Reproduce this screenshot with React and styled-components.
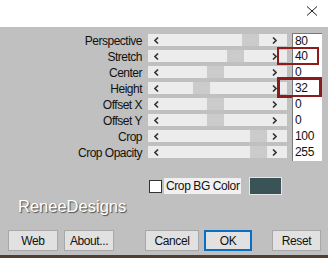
import React from 'react'
import styled, { createGlobalStyle } from 'styled-components'

const GlobalStyle = createGlobalStyle`
  html, body {
    margin: 0;
    padding: 0;
    background: #c0c0c0;
  }
  body {
    font-family: "Liberation Sans", Arial, sans-serif;
  }
`

const Window = styled.div`
  width: 328px;
  height: 258px;
  display: flex;
  flex-direction: column;
  background: #c0c0c0;
  overflow: hidden;
  box-sizing: border-box;
  border-bottom: 3px solid #4f3f33;
`

const TitleBar = styled.div`
  height: 27px;
  flex: none;
  background: #fff;
  display: flex;
  justify-content: flex-end;
  align-items: flex-start;
  padding: 6px 10px 0 0;
  box-sizing: border-box;
`

const Close = styled.svg`
  width: 12px;
  height: 10px;
`

const Rows = styled.div`
  margin-top: 6px;
  display: grid;
  grid-template-columns: 142px 139px 29px;
  column-gap: 6px;
  grid-auto-rows: 16px;
`

const Label = styled.div`
  text-align: right;
  font-size: 12px;
  letter-spacing: -0.5px;
  line-height: 16px;
  color: #111;
  white-space: nowrap;
`

const Track = styled.div`
  position: relative;
  height: 12px;
  margin-top: 1px;
  background: #ececec;
  display: flex;
  align-items: center;
  justify-content: space-between;
  padding: 0 10px 0 6px;
  box-sizing: border-box;
`

const Thumb = styled.div`
  position: absolute;
  top: 0;
  width: 17px;
  height: 12px;
  background: #cbcbcb;
`

const Arrow = styled.svg`
  width: 5px;
  height: 7px;
  position: relative;
  z-index: 1;
`

const ValueCell = styled.div`
  position: relative;
  margin-left: -1px;
  background: #fff;
  border-left: 1px solid #7a7a7a;
  border-top: ${p => (p.$first ? '1px solid #7a7a7a' : 'none')};
  font-size: 12px;
  letter-spacing: -0.3px;
  line-height: 15px;
  padding-left: 2px;
  color: #111;
  box-sizing: border-box;
`

const Mark = styled.div`
  position: absolute;
  left: -16px;
  top: ${p => p.$top}px;
  width: ${p => p.$w}px;
  height: ${p => p.$h}px;
  border: ${p => p.$b}px solid #8c1c1c;
  box-sizing: border-box;
`

const ColorRow = styled.div`
  margin-top: 16px;
  height: 18px;
  display: flex;
  align-items: center;
  padding-left: 149px;
`

const Check = styled.div`
  width: 13px;
  height: 13px;
  background: #fff;
  border: 1px solid #333;
  box-sizing: border-box;
`

const CheckLabel = styled.div`
  margin-left: 2px;
  width: 77px;
  height: 16px;
  background: #f0f0f0;
  font-size: 12px;
  letter-spacing: -0.4px;
  line-height: 16px;
  padding-left: 2px;
  box-sizing: border-box;
  white-space: nowrap;
  overflow: hidden;
  color: #111;
`

const Swatch = styled.div`
  margin-left: 8px;
  width: 33px;
  height: 18px;
  background: #3a5356;
  border: 1px solid #e6e6e6;
  box-sizing: border-box;
`

const Brand = styled.div`
  margin-top: 1px;
  padding-left: 18px;
  height: 22px;
  font-size: 16.5px;
  line-height: 20px;
  color: #fff;
  text-shadow: 1px 1px 1px #4a4a4a;
`

const Buttons = styled.div`
  margin-top: 12px;
  display: flex;
  padding-left: 8px;
`

const Button = styled.button`
  height: 21px;
  width: ${p => p.$w}px;
  margin-left: ${p => p.$gap || 0}px;
  background: #e1e1e1;
  border: ${p => (p.$primary ? '2px solid #0a6fc4' : '1px solid #a8a8a8')};
  font-family: "Liberation Sans", Arial, sans-serif;
  font-size: 12px;
  letter-spacing: -0.4px;
  color: #111;
  padding: 0;
`

const rows = [
  { label: 'Perspective', value: 80, thumb: 94 },
  { label: 'Stretch', value: 40, thumb: 79, mark: { top: -2, w: 42, h: 18, b: 2 } },
  { label: 'Center', value: 0, thumb: 59 },
  { label: 'Height', value: 32, thumb: 45, mark: { top: -4, w: 45, h: 21, b: 3 } },
  { label: 'Offset X', value: 0, thumb: 59 },
  { label: 'Offset Y', value: 0, thumb: 59 },
  { label: 'Crop', value: 100, thumb: 102 },
  { label: 'Crop Opacity', value: 255, thumb: 102 },
]

const Slider = ({ thumb }) => (
  <Track>
    <Thumb style={{ left: thumb }} />
    <Arrow viewBox="0 0 5 7">
      <polyline points="4,0.5 1,3.5 4,6.5" fill="none" stroke="#333" strokeWidth="1.6" />
    </Arrow>
    <Arrow viewBox="0 0 5 7">
      <polyline points="1,0.5 4,3.5 1,6.5" fill="none" stroke="#333" strokeWidth="1.6" />
    </Arrow>
  </Track>
)

export default function App() {
  return (
    <Window>
      <GlobalStyle />
      <TitleBar>
        <Close viewBox="0 0 12 10">
          <path d="M1 0.5 L11 9.5 M11 0.5 L1 9.5" stroke="#222" strokeWidth="1" />
        </Close>
      </TitleBar>
      <Rows>
        {rows.map((r, i) => (
          <React.Fragment key={r.label}>
            <Label>{r.label}</Label>
            <Slider thumb={r.thumb} />
            <ValueCell $first={i === 0}>
              {r.value}
              {r.mark && <Mark $top={r.mark.top} $w={r.mark.w} $h={r.mark.h} $b={r.mark.b} />}
            </ValueCell>
          </React.Fragment>
        ))}
      </Rows>
      <ColorRow>
        <Check />
        <CheckLabel>Crop BG Color</CheckLabel>
        <Swatch />
      </ColorRow>
      <Brand>ReneeDesigns</Brand>
      <Buttons>
        <Button $w={50}>Web</Button>
        <Button $w={50} $gap={6}>About...</Button>
        <Button $w={54} $gap={31}>Cancel</Button>
        <Button $w={48} $gap={5} $primary>OK</Button>
        <Button $w={49} $gap={20}>Reset</Button>
      </Buttons>
    </Window>
  )
}
